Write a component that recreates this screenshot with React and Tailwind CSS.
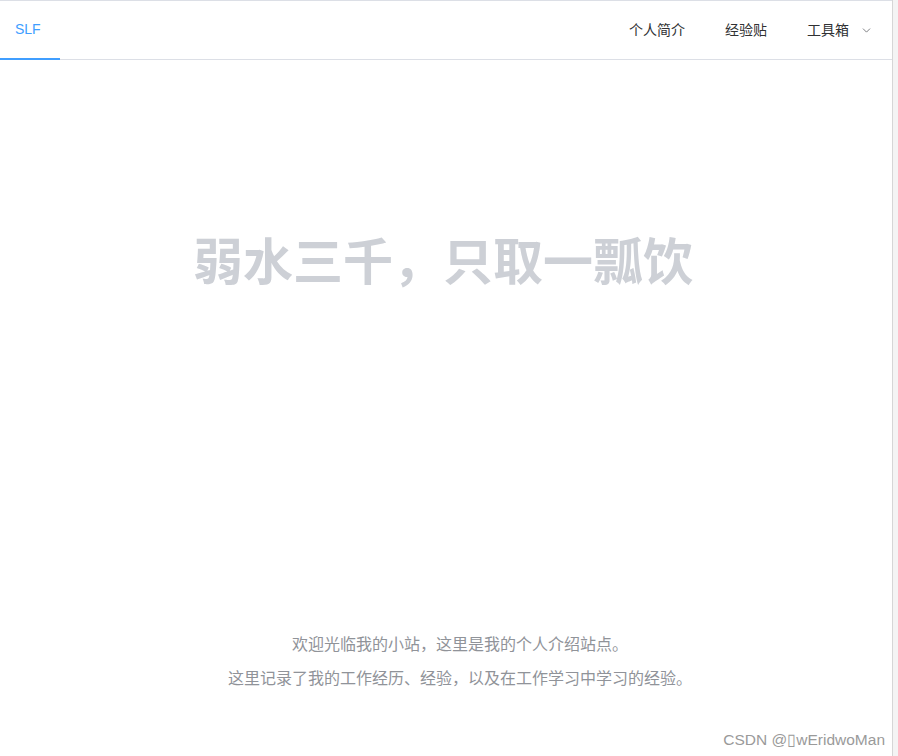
import { ChevronDown } from 'lucide-react';

const font = { fontFamily: '"Liberation Sans", "Noto Sans CJK SC", sans-serif' };

export default function App() {
  return (
    <div className="flex h-[756px] w-[898px] bg-white overflow-hidden" style={font}>
      <div className="relative flex-1 flex flex-col border-t border-[#dcdfe6]">
        {/* Header menu */}
        <div className="flex h-[59px] items-stretch border-b border-[#dcdfe6] text-[14px]">
          <div className="flex w-[60px] items-center pl-[15px] text-[#409eff] border-b-2 border-[#409eff] -mb-px">
            SLF
          </div>
          <div className="flex-1" />
          <div className="flex items-center px-5 text-[#303133]">个人简介</div>
          <div className="flex items-center px-5 text-[#303133]">经验贴</div>
          <div className="flex items-center pl-5 pr-[19px] text-[#303133]">
            工具箱
            <ChevronDown className="ml-[11px] w-[13px] h-[13px] text-[#606266]" strokeWidth={1.5} />
          </div>
        </div>

        {/* Hero */}
        <div className="flex flex-col items-center">
          <h1 className="mt-[178px] mr-[6px] text-[50px] leading-[50px] font-bold text-[#cdd0d6]">
            弱水三千，只取一瓢饮
          </h1>
          <div className="mt-[340px] ml-[28px] text-[16px] leading-[34px] text-[#909399] text-center">
            <p>欢迎光临我的小站，这里是我的个人介绍站点。</p>
            <p>这里记录了我的工作经历、经验，以及在工作学习中学习的经验。</p>
          </div>
        </div>

        {/* Watermark */}
        <div className="absolute right-[7px] bottom-[5px] text-[15.5px] text-[#9a9a9a]">
          CSDN @▯wEridwoMan
        </div>
      </div>

      {/* Scrollbar strip */}
      <div className="w-[6px] border-l border-[#d6d6d6] bg-[#f4f4f4]" />
    </div>
  );
}
